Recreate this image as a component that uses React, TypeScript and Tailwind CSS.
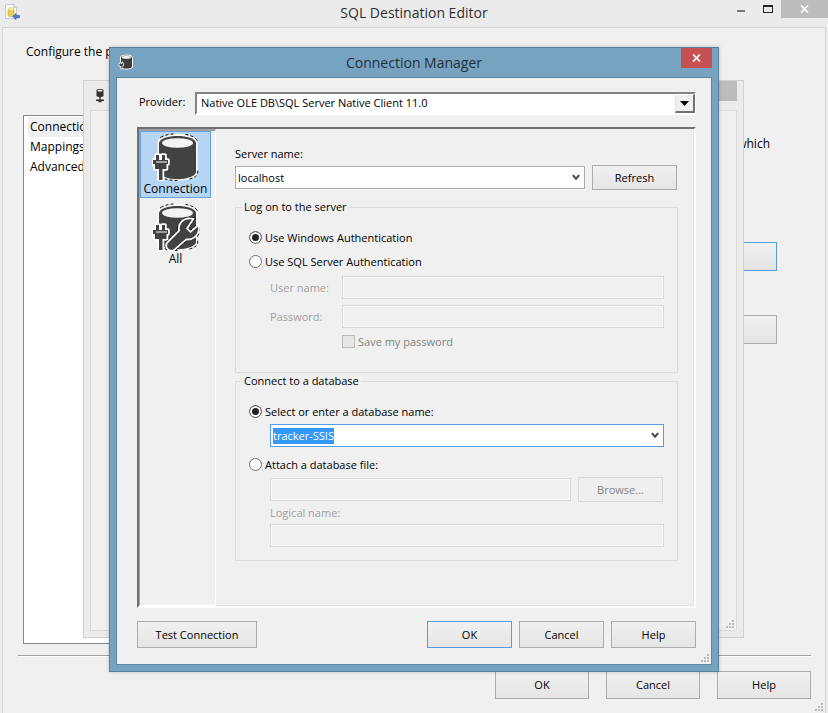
import { useEffect, useRef } from "react";
import type { ReactNode, Ref } from "react";

const button =
  "flex items-center justify-center border border-[#acacac] bg-linear-to-b from-[#f0f0f0] to-[#e5e5e5] text-black";
const defaultButton =
  "flex items-center justify-center border border-[#569de5] bg-linear-to-b from-[#f0f0f0] to-[#e5e5e5] text-black";
const disabledBox = "h-[23px] min-w-0 border border-[#d9d9d9] bg-[#f0f0f0] px-1 shadow-[inset_0_0_0_1px_#fbfbfb]";

const plugPath = "M4 22h3v5h3v-5h3v5h3v4h-1.500v5h-4V47H7v-11H3v-5H1v-4h3z";
const wrenchPath =
  "M40 16.500c-7.500-1.500-13.500 4-12 11.500L16 40c-3 3.500 2 9 6 6L34 35.500c7 1 13-4.500 12-12L38.500 30l-4.500-4.500z";

function Plug() {
  return (
    <g strokeLinejoin="round">
      <path d={plugPath} fill="#fff" stroke="#fff" strokeWidth="3.500" />
      <path d={plugPath} fill="#424242" />
      <path d="M4 29h11" stroke="#fff" strokeWidth="1" />
    </g>
  );
}

function Cylinder() {
  return (
    <g>
      <path
        d="M5.500 9C7-2 44-2 45.700 9V40C44 50 7 50 5.500 40z"
        fill="#f8f8f8"
        stroke="#111"
        strokeWidth="1"
        strokeDasharray="0 5 4 2 3 2 3 12 3 2 3 2 4 30 3 2 3 2 3 12 3 2 3 2 3 60"
      />
      <path d="M7 10C8 .5 43 .5 44 10V39C43 48.500 8 48.500 7 39z" fill="#424242" />
      <ellipse cx="25.500" cy="10" rx="15.500" ry="4.800" fill="#f4f4f4" />
    </g>
  );
}

function ConnectionIcon() {
  return (
    <svg viewBox="0 0 48 48" className="size-12" aria-hidden="true">
      <Cylinder />
      <Plug />
    </svg>
  );
}

function AllIcon() {
  return (
    <svg viewBox="0 0 48 48" className="size-12" aria-hidden="true">
      <Cylinder />
      <Plug />
      <path d={wrenchPath} fill="none" stroke="#111" strokeWidth="5" strokeDasharray="3 2" />
      <path d={wrenchPath} fill="#424242" stroke="#fff" strokeWidth="3.500" />
      <path d={wrenchPath} fill="#424242" />
    </svg>
  );
}

function SmallDatabaseIcon() {
  return (
    <svg viewBox="0 0 16 16" className="size-4" aria-hidden="true">
      <path d="M2.500 3C3 .5 14 .5 14.500 3v10c-.5 2.800-11.500 2.800-12 0z" fill="#3d3d3d" stroke="#fff" />
      <ellipse cx="8.500" cy="3.300" rx="4.800" ry="1.500" fill="#eee" />
      <path d="M1 9.500h1V8h1v1.500h1V8h1v1.500h.5V12H4v3H2.500v-3H1z" fill="#3d3d3d" stroke="#fff" strokeWidth=".7" />
    </svg>
  );
}

function FileIcon() {
  return (
    <svg viewBox="0 0 16 16" className="size-4" aria-hidden="true">
      <path d="M1.500.5h8l3 3v11h-11z" fill="#fbfbfb" stroke="#c4cad4" />
      <path d="M9.500.5v3h3" fill="none" stroke="#c4cad4" />
      <path d="M4 5c0-1.500 6-1.500 6 0v6.500c0 1.500-6 1.500-6 0z" fill="#e9cf55" stroke="#c8a52e" strokeWidth=".6" />
      <ellipse cx="7" cy="5" rx="2.800" ry=".9" fill="#fbf0a8" />
      <path d="M8.500 12.500L12 9.500v1.800h3.500v2.600H12v1.800z" fill="#4d7fcb" stroke="#2f5fa8" strokeWidth=".5" />
    </svg>
  );
}

function ServerIcon() {
  return (
    <svg viewBox="0 0 12 16" className="h-4 w-3" aria-hidden="true">
      <path d="M2.500 2C3 .8 9 .8 9.500 2v6c-.5 1.500-6.500 1.500-7 0z" fill="#333" />
      <ellipse cx="6" cy="2.700" rx="2.600" ry=".9" fill="#eee" />
      <path d="M5.300 9h1.400v2.500H10V13H7.500v1.200h-3V13H2v-1.500h3.300z" fill="#333" />
    </svg>
  );
}

function CloseGlyph() {
  return (
    <svg viewBox="0 0 9 8" className="h-2 w-[9px]" aria-hidden="true">
      <path d="M1 .5l7 7M8 .5l-7 7" stroke="#fff" strokeWidth="1.700" />
    </svg>
  );
}

function Grip() {
  return (
    <svg viewBox="0 0 9 9" className="size-[9px]" fill="#bcbcbc" aria-hidden="true">
      <path d="M6 0h2v2H6zM3 3h2v2H3zM6 3h2v2H6zM0 6h2v2H0zM3 6h2v2H3zM6 6h2v2H6z" />
    </svg>
  );
}

function ComboBox({
  id,
  value,
  active,
  inputRef,
  label,
}: {
  id: string;
  value: string;
  active?: boolean;
  inputRef?: Ref<HTMLInputElement>;
  label?: string;
}) {
  return (
    <div className={`flex h-[23px] flex-1 items-center border bg-white ${active ? "border-[#569de5]" : "border-[#acacac]"}`}>
      <input
        id={id}
        ref={inputRef}
        aria-label={label}
        defaultValue={value}
        className="h-4 min-w-0 flex-1 bg-transparent pl-[2px] leading-4 outline-none selection:bg-[#3399ff] selection:text-white"
      />
      <button type="button" aria-label="Show list" className="flex h-full w-4 items-center justify-center">
        <svg viewBox="0 0 8 7" className="h-[7px] w-2" aria-hidden="true">
          <path d="M.8 1.200L4 4.700l3.200-3.500" fill="none" stroke="#484848" strokeWidth="2" />
        </svg>
      </button>
    </div>
  );
}

function RadioRow({ name, label, checked }: { name: string; label: string; checked?: boolean }) {
  return (
    <label className="flex h-6 items-center gap-[3px] pb-px">
      <input
        type="radio"
        name={name}
        defaultChecked={checked}
        className="size-[13px] appearance-none rounded-full border border-[#707070] bg-white checked:bg-[#222] checked:shadow-[inset_0_0_0_2px_#fff]"
      />
      {label}
    </label>
  );
}

function Group({ title, children }: { title: string; children: ReactNode }) {
  return (
    <fieldset className="min-w-0 border border-[#dcdcdc] px-[13px]">
      <legend className="-ml-[7px] px-[2px] leading-4">{title}</legend>
      {children}
    </fieldset>
  );
}

function ConnectionManager() {
  const database = useRef<HTMLInputElement>(null);
  useEffect(() => {
    database.current?.focus();
    database.current?.select();
  }, []);

  return (
    <section
      aria-label="Connection Manager"
      className="absolute top-[47px] left-[109px] w-[610px] border border-[#587f9b] bg-[#77a3c0] px-[6px] pb-[6px] shadow-[0_0_4px_#0003]"
    >
      <header className="flex h-[29px] items-start">
        <span className="w-[31px] pt-[6px] pl-[2px]">
          <SmallDatabaseIcon />
        </span>
        <h2 className="flex-1 text-center text-sm leading-[29px] text-[#1d303e]">Connection Manager</h2>
        <button type="button" aria-label="Close" className="flex h-5 w-[31px] items-center justify-center bg-[#c75050]">
          <CloseGlyph />
        </button>
      </header>
      <div className="border border-[#5b87a5] bg-[#f0f0f0] pt-[14px] pb-px">
        <div className="pr-[15px] pl-5">
          <div className="flex items-center">
            <label htmlFor="provider" className="w-[58px] pb-1 pl-[2px]">
              Provider:
            </label>
            <div className="relative flex-1">
              <select
                id="provider"
                className="block h-[23px] w-full appearance-none border-2 border-t-[#828282] border-r-white border-b-white border-l-[#828282] bg-white pb-px pl-1"
              >
                <option>Native OLE DB\SQL Server Native Client 11.0</option>
              </select>
              <span className="pointer-events-none absolute top-[2px] right-[1px] flex h-[19px] w-5 items-center justify-center border border-t-white border-r-2 border-r-[#707070] border-b-2 border-b-[#707070] border-l-[#e3e3e3] bg-[#f0f0f0]">
                <svg viewBox="0 0 9 5" className="h-[5px] w-[9px]" aria-hidden="true">
                  <path d="M0 0h9L4.500 5z" />
                </svg>
              </span>
            </div>
          </div>

          <div className="mt-3 flex h-[481px] border-2 border-t-[#707070] border-r-white border-b-white border-l-[#707070]">
            <nav className="flex w-[77px] flex-col gap-[3px] border border-t-2 border-t-[#a0a0a0] border-r-white border-b-white border-l-[#a0a0a0]">
              <button
                type="button"
                className="flex h-[67px] w-[71px] flex-col items-center border border-[#6ba0d8] bg-[#b5d5f3] pt-px text-xs leading-4"
              >
                <ConnectionIcon />
                Connection
              </button>
              <button type="button" className="flex h-[67px] w-[71px] flex-col items-center pt-[2px] text-xs leading-4">
                <AllIcon />
                All
              </button>
            </nav>
            <div className="flex-1 border-r border-b border-[#e3e3e3] pt-[14px] pr-[15px] pl-[19px]">
              <label htmlFor="server" className="block h-[22px] leading-[22px]">
                Server name:
              </label>
              <div className="mb-[9px] flex items-center gap-[7px] pr-px">
                <ComboBox id="server" value="localhost" />
                <button type="button" className={`${button} h-[25px] w-[85px]`}>
                  Refresh
                </button>
              </div>

              <Group title="Log on to the server">
                <div className="pt-[11px] pb-[18px]">
                  <RadioRow name="auth" label="Use Windows Authentication" checked />
                  <RadioRow name="auth" label="Use SQL Server Authentication" />
                  <div className="mt-[2px] grid grid-cols-[72px_1fr] items-center gap-y-[6px] pl-[21px] text-[#a0a0a0]">
                    <label htmlFor="user">User name:</label>
                    <input id="user" disabled className={disabledBox} />
                    <label htmlFor="password">Password:</label>
                    <input id="password" type="password" disabled className={disabledBox} />
                  </div>
                  <label className="mt-[2px] ml-[93px] flex h-6 items-center gap-[3px] pb-px text-[#838383]">
                    <input type="checkbox" disabled className="size-[13px] appearance-none border border-[#bcbcbc] bg-[#e6e6e6]" />
                    Save my password
                  </label>
                </div>
              </Group>

              <Group title="Connect to a database">
                <div className="pt-[11px] pb-[13px]">
                  <RadioRow name="source" label="Select or enter a database name:" checked />
                  <div className="mb-[6px] flex pl-[21px]">
                    <ComboBox id="database" value="tracker-SSIS" label="Database name" active inputRef={database} />
                  </div>
                  <RadioRow name="source" label="Attach a database file:" />
                  <div className="flex items-center gap-[7px] pr-px pl-[21px]">
                    <input disabled aria-label="Database file" className={`${disabledBox} flex-1`} />
                    <button
                      type="button"
                      disabled
                      className="flex h-[25px] w-[85px] items-center justify-center border border-[#d9d9d9] bg-[#efefef] text-[#838383]"
                    >
                      Browse...
                    </button>
                  </div>
                  <div className="flex flex-col pl-[21px]">
                    <label htmlFor="logical" className="leading-[22px] text-[#a0a0a0]">
                      Logical name:
                    </label>
                    <input id="logical" disabled className={disabledBox} />
                  </div>
                </div>
              </Group>
            </div>
          </div>

          <div className="mt-[13px] flex gap-[7px]">
            <button type="button" className={`${button} mr-auto h-[27px] w-[120px]`}>
              Test Connection
            </button>
            <button type="button" className={`${defaultButton} h-[27px] w-[85px]`}>
              OK
            </button>
            <button type="button" className={`${button} h-[27px] w-[85px]`}>
              Cancel
            </button>
            <button type="button" className={`${button} h-[27px] w-[85px]`}>
              Help
            </button>
          </div>
        </div>
        <div className="mt-[6px] flex justify-end pr-px">
          <Grip />
        </div>
      </div>
    </section>
  );
}

function BackWindow() {
  return (
    <section
      aria-label="Background window"
      className="absolute top-20 left-[83px] w-[661px] border border-[#d0d0d0] bg-[#ebebeb] px-[6px] pb-[6px]"
    >
      <header className="flex h-[29px] items-start justify-between pl-1">
        <span className="pt-[7px]">
          <ServerIcon />
        </span>
        <span className="h-5 w-[31px] bg-[#bcbcbc]" />
      </header>
      <div className="flex h-[521px] items-end justify-end border border-[#d9d9d9] bg-[#f0f0f0] pr-px pb-px">
        <Grip />
      </div>
    </section>
  );
}

export default function App() {
  return (
    <div className="relative flex min-h-screen flex-col overflow-hidden bg-[#ebebeb] px-[2px] font-['Open_Sans','Noto_Sans',sans-serif] text-[11px] leading-4 text-black">
      <header className="flex h-[27px] items-start">
        <span className="w-[99px] pt-1 pl-[2px]">
          <FileIcon />
        </span>
        <h1 className="flex-1 text-center text-sm leading-[26px] text-[#303030]">SQL Destination Editor</h1>
        <div className="flex">
          <button type="button" aria-label="Minimize" className="flex h-[18px] w-[27px] items-center justify-center pt-1">
            <span className="h-[2px] w-2 bg-[#777]" />
          </button>
          <button type="button" aria-label="Maximize" className="flex h-[18px] w-[27px] items-center justify-center">
            <span className="h-2 w-[10px] border border-t-2 border-[#222]" />
          </button>
          <button type="button" aria-label="Close" className="-mr-[2px] flex h-[18px] w-[47px] items-center justify-center bg-[#bcbcbc]">
            <CloseGlyph />
          </button>
        </div>
      </header>

      <main className="flex flex-1 flex-col border border-b-0 border-[#d6d6d6] bg-[#f0f0f0] pr-[14px] pl-[15px]">
        <p className="h-[87px] pt-4 pl-2 text-xs leading-4">Configure the p</p>
        <div className="flex justify-between pr-[34px] pl-[5px]">
          <ul className="h-[529px] w-60 border border-[#828790] bg-white py-px pl-1 text-xs leading-5">
            <li className="bg-[#f0f0f0] pl-[2px]">Connection</li>
            <li className="pl-[2px]">Mappings</li>
            <li className="pl-[2px]">Advanced</li>
          </ul>
          <div className="flex flex-col items-end">
            <p className="pt-[19px] pr-[7px] text-xs leading-5">which</p>
            <button type="button" aria-label="New" className={`${defaultButton} mt-[88px] h-[29px] w-[94px]`} />
            <button type="button" aria-label="Preview" className={`${button} mt-11 h-[29px] w-[94px]`} />
          </div>
        </div>
        <hr className="mt-[11px] border-t border-[#a0a0a0] shadow-[0_1px_0_#fff]" />
        <footer className="mt-[15px] flex justify-end gap-[17px]">
          <button type="button" className={`${button} h-7 w-[94px]`}>
            OK
          </button>
          <button type="button" className={`${button} h-7 w-[94px]`}>
            Cancel
          </button>
          <button type="button" className={`${button} h-7 w-[94px]`}>
            Help
          </button>
        </footer>
        <div className="-mr-[13px] mt-1 flex justify-end">
          <Grip />
        </div>
      </main>

      <BackWindow />
      <ConnectionManager />
    </div>
  );
}
